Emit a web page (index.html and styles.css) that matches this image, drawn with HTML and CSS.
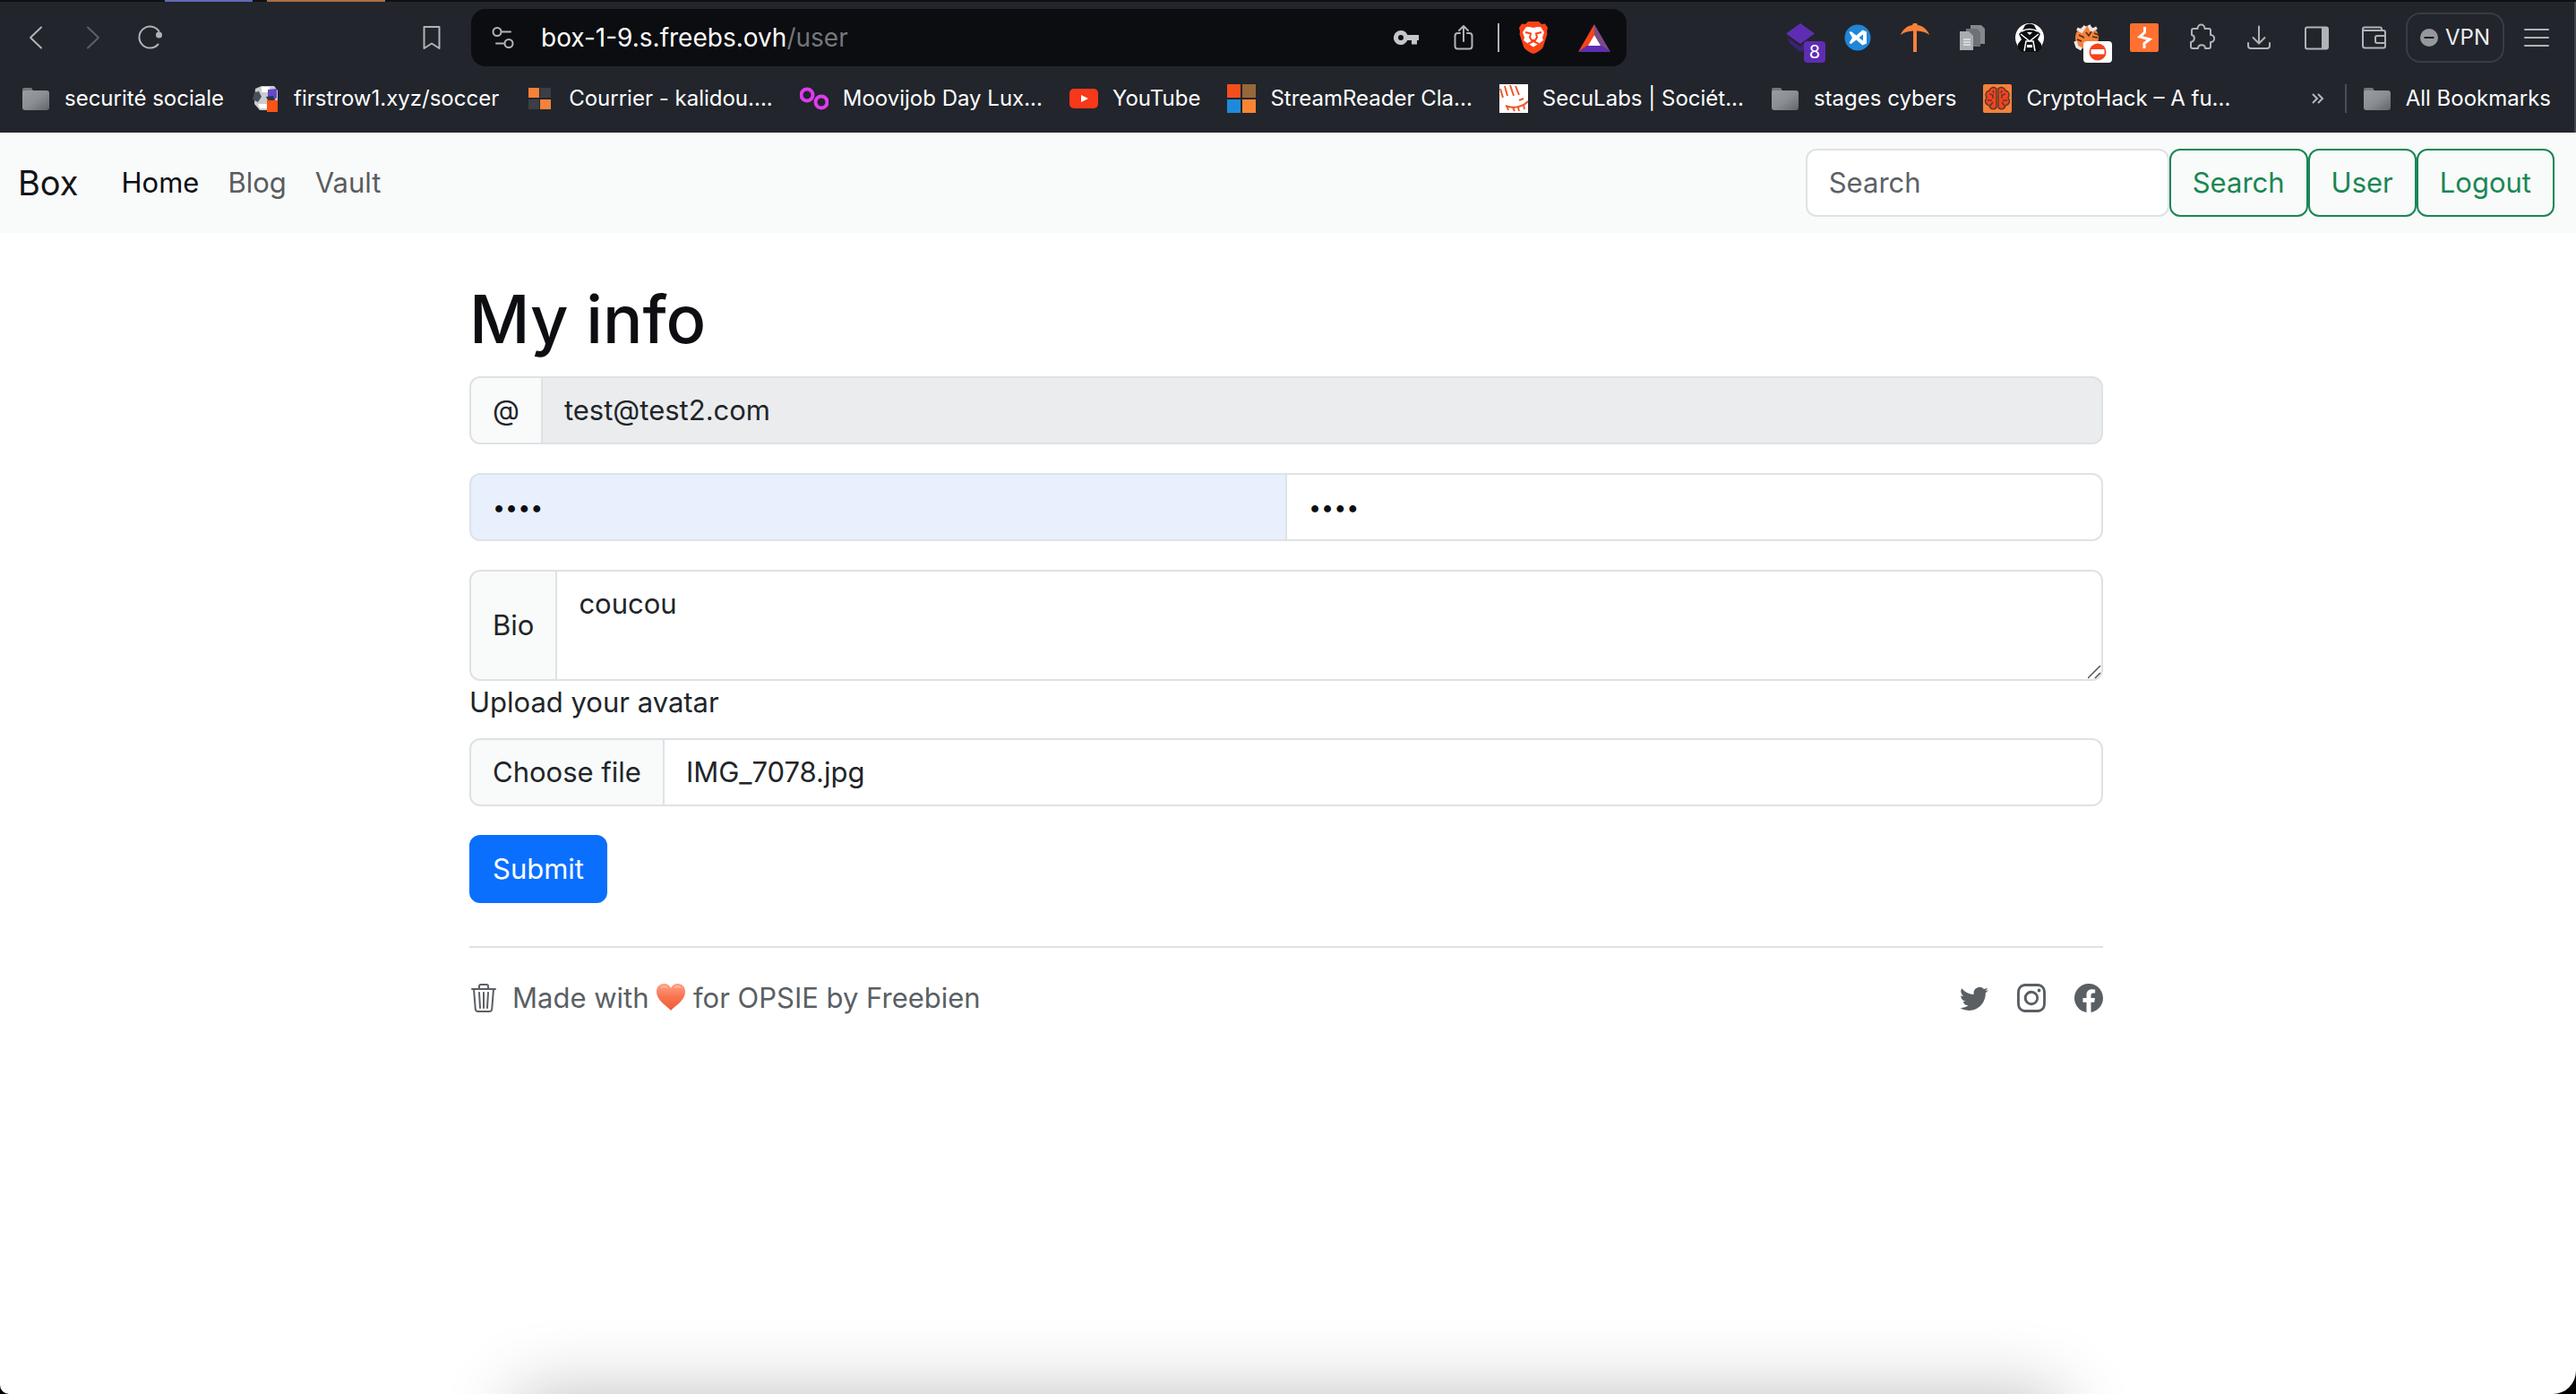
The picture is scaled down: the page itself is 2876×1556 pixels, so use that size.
FILE: index.html
```html
<!DOCTYPE html>
<html lang="en">
<head>
<meta charset="utf-8">
<title>Box - My info</title>
<link rel="stylesheet" href="styles.css">
</head>
<body>
<svg class="defs" aria-hidden="true">
  <defs>
    <linearGradient id="folder-fill" x1="0" y1="0" x2="1" y2="1">
      <stop offset="0" stop-color="#9a9ea2"/><stop offset=".5" stop-color="#8b8f93"/><stop offset="1" stop-color="#62666a"/>
    </linearGradient>
    <linearGradient id="heart-fill" x1="0" y1="0" x2="0" y2="1">
      <stop offset="0" stop-color="#ffa184"/><stop offset=".5" stop-color="#f87450"/><stop offset="1" stop-color="#ee5a30"/>
    </linearGradient>
    <symbol id="folder" viewBox="0 0 32 32">
      <path fill="#74787c" d="M1 6a2 2 0 0 1 2-2h8l2 3h15v6H1z"/>
      <rect x="1" y="7" width="30" height="22" rx="3" fill="url(#folder-fill)"/>
    </symbol>
  </defs>
</svg>
<div class="window">
  <header class="chrome">
    <div class="tab-strip"><span class="tab-mark tab-mark-blue"></span><span class="tab-mark tab-mark-orange"></span></div>
    <div class="toolbar">
      <div class="history">
        <button class="tool" type="button" aria-label="Back"><svg viewBox="0 0 32 32"><path class="line" d="M22 4.500 10 16l12 11.500"/></svg></button>
        <button class="tool tool-dim" type="button" aria-label="Forward"><svg viewBox="0 0 32 32"><path class="line" d="M10 4.500 22 16 10 27.500"/></svg></button>
        <button class="tool" type="button" aria-label="Reload"><svg viewBox="0 0 32 32"><path class="line" d="M24.500 23.500A12 12 0 1 1 25.500 9"/><circle cx="25.500" cy="13" r="3.500" fill="currentColor"/></svg></button>
        <button class="tool tool-last" type="button" aria-label="Bookmark this page"><svg viewBox="0 0 32 32"><path class="line" d="M7.500 4h17v24L16 22.500 7.500 28z"/></svg></button>
      </div>
      <div class="address">
        <button class="tool" type="button" aria-label="Site settings"><svg viewBox="0 0 32 32"><g class="line"><circle cx="9" cy="9.500" r="4.500"/><path d="M14 9.500h10M8 22.500h9"/><circle cx="22" cy="22.500" r="4.500"/></g></svg></button>
        <span class="url">box-1-9.s.freebs.ovh<span class="url-path">/user</span></span>
        <button class="tool key" type="button" aria-label="Passwords"><svg viewBox="0 0 32 32"><path fill="#c3c7cb" fill-rule="evenodd" d="M10 8a8 8 0 1 0 7.300 11H22v4.500h6V19h2v-6H17.300A8 8 0 0 0 10 8m0 5a3 3 0 1 1 0 6 3 3 0 0 1 0-6"/></svg></button>
        <button class="tool share" type="button" aria-label="Share"><svg viewBox="0 0 32 32"><path class="line" d="M12 11H9.500A3 3 0 0 0 6.500 14v11.500a3 3 0 0 0 3 3h13a3 3 0 0 0 3-3V14a3 3 0 0 0-3-3H20M16 20V3.500M11 8l5-5 5 5"/></svg></button>
        <span class="address-rule"></span>
        <button class="tool big" type="button" aria-label="Brave Shields"><svg viewBox="0 0 36 36"><path fill="#fb4218" d="M12 0h12l3 3 4-.5L34 7l-1 4 .5 3-4.500 14c-1 3-7 7-11 8-4-1-10-5-11-8L2.500 14l.5-3-1-4 3-4.500L9 3z"/><path fill="#fff" d="m18 7 4.500-1 3.500 0 4 6-2 6 1 3-4 3-7 4.500L11 24l-4-3 1-3-2-6 4-6h3.500z"/><path fill="none" stroke="#fb4218" stroke-width="2" d="m9 12 6 1.500-1 4 2 3.500h4l2-3.500-1-4 6-1.500M12 25l6-3 6 3"/></svg></button>
        <button class="tool big bat" type="button" aria-label="Brave Rewards"><svg viewBox="0 0 36 36"><path fill="#fb4218" d="M18 3v12l-6 11L0 34z"/><path fill="#7b4a86" d="M18 3v12l6 11 12 8z"/><path fill="#5f2db3" d="M0 34l10-7h16l10 7z"/><path fill="#fff" d="m18 15 7 12H11z"/></svg></button>
      </div>
      <div class="extensions">
        <button class="tool" type="button" aria-label="Layers, 8 items"><svg viewBox="0 0 32 32"><path fill="#3d2277" d="m2 16 14 10 8-7v9l-8 4L4 22z"/><path fill="#5f2db3" d="m16 0 16 11.500L16 23 0 11.500z"/></svg><span class="badge badge-count">8</span></button>
        <button class="tool" type="button" aria-label="VS Code"><svg viewBox="0 0 32 32"><circle cx="16" cy="16" r="14.500" fill="#1f86d8"/><path fill="#fff" fill-rule="evenodd" d="m6.500 10 2-1 6 4.500 7-6 4.500 2v13l-4.500 2-7-6-6 4.500-2-1 3.500-6zM22 12.500 17.500 16l4.500 3.500z"/></svg></button>
        <button class="tool" type="button" aria-label="Pickaxe"><svg viewBox="0 0 32 32"><path fill="#f5813a" d="M14 0h4l1 2c6 1 11 5 13 11-4-3-8-4-14-4.500V32h-4V8.500C8 9 4 10 0 13 2 7 7 3 13 2z"/></svg></button>
        <button class="tool" type="button" aria-label="Documents"><svg viewBox="0 0 32 32"><path fill="#85898d" d="M14 2h12l4 4v17H14z"/><path fill="#6e7276" d="M9 6h12l4 4v16H9z"/><path fill="#a9adb1" d="M2 9h10l5 5v16H2z"/><path stroke="#e4e6e8" stroke-width="1.500" d="M6 18h8M6 21h8M6 24h8"/></svg></button>
        <button class="tool" type="button" aria-label="Agent"><svg viewBox="0 0 32 32"><circle cx="16" cy="16" r="16" fill="#fff"/><path fill="#0d0e12" d="M11 2q5-3 10 0l3 6 4 4-3 6 4 5v5a16 16 0 0 1-26 0v-5l4-5-3-6 4-4z"/><path fill="none" stroke="#fff" stroke-width="1.500" d="M7 9q9-5 18 0M6 12l10 8 10-8M10 31l2-11h8l2 11"/><path fill="#fff" d="M13 10h6l-3 3zM13 24h6v3h-6z"/></svg></button>
        <button class="tool" type="button" aria-label="FoxyProxy, off"><svg viewBox="0 0 32 32"><circle cx="16" cy="16" r="13" fill="#f5813a"/><path fill="none" stroke="#e9e9ea" stroke-width="3.500" d="M5 6l5 3 4-6M18 2l3 6 6-3M3 20l2 6 5 3"/><path fill="none" stroke="#4b2c1c" stroke-width="1.500" d="M7 13l6 3M15 10l3 4 3-5M24 11l5 2M5 18l5 2M22 15l6 1"/></svg><span class="badge badge-off"><svg viewBox="0 0 20 20"><circle cx="10" cy="10" r="9.500" fill="#f4431f"/><rect x="2.500" y="7" width="15" height="5.500" rx="1" fill="#fff"/></svg></span></button>
        <button class="tool" type="button" aria-label="Burp"><svg viewBox="0 0 32 32"><rect width="32" height="32" rx="2" fill="#ff7031"/><path fill="none" stroke="#fff" stroke-width="3" d="M16.500 4v6L11 15l11 3-6 4.500V28"/></svg></button>
        <button class="tool" type="button" aria-label="Extensions"><svg viewBox="0 0 32 32"><path class="line" d="M5 8a2 2 0 0 1 2-2h4.500c0-6 8-6 8 0H24a2 2 0 0 1 2 2v5c5.500 0 5.500 8 0 8v5a2 2 0 0 1-2 2h-4c0-5-8-5-8 0H6a2 2 0 0 1-2-2v-5c5-1 5-7 1-8z"/></svg></button>
        <button class="tool" type="button" aria-label="Downloads"><svg viewBox="0 0 32 32"><path class="line" d="M16 3.500V22M9.500 16l6.500 6.500 6.500-6.500M4 22v3a3 3 0 0 0 3 3h18a3 3 0 0 0 3-3v-3"/></svg></button>
        <button class="tool" type="button" aria-label="Sidebar"><svg viewBox="0 0 32 32"><rect class="line" x="4" y="4.500" width="25" height="24" rx="2"/><path fill="currentColor" d="M22 5h6v23h-6z"/></svg></button>
        <button class="tool" type="button" aria-label="Wallet"><svg viewBox="0 0 32 32"><path class="line" d="M25 8V6.500a2 2 0 0 0-2-2H6a2 2 0 0 0-2 2V25a2.500 2.500 0 0 0 2.500 2.500H27a2 2 0 0 0 2-2V10a2 2 0 0 0-2-2H6a2 2 0 0 1-2-2M29 14h-9a2 2 0 0 0-2 2v4a2 2 0 0 0 2 2h9"/></svg></button>
        <button class="vpn" type="button"><svg viewBox="0 0 20 20"><circle cx="10" cy="10" r="10" fill="#95999e"/><path stroke="#1c1f25" stroke-width="2" d="M4.500 10h11"/></svg>VPN</button>
        <button class="tool" type="button" aria-label="Menu"><svg viewBox="0 0 32 32"><path class="line" d="M3 7h26M3 16h26M3 25h26"/></svg></button>
      </div>
    </div>
    <nav class="bookmarks" aria-label="Bookmarks">
      <a class="bookmark" href="#"><svg viewBox="0 0 32 32"><use href="#folder"/></svg>securité sociale</a>
      <a class="bookmark" href="#"><svg viewBox="0 0 32 32"><path fill="#c9cbd0" d="M5 5 12 2h14l4 5v14l-8 8H10l-6-7z"/><path fill="#fff" d="M12 3h9v6h-9zM8 22h10v5H10z"/><path fill="#4b4f57" d="M4 9l5-1 3 6-4 6-6-3z"/><path fill="#6548c9" d="M19 6l10-1v10l-5 4-5-3z"/><path fill="#33363d" d="M17 14l8-1 2 5-7 2z"/><path fill="#fb5416" d="M18 18h12v13H18z"/></svg>firstrow1.xyz/soccer</a>
      <a class="bookmark" href="#"><svg viewBox="0 0 32 32"><path fill="#f5813a" d="M3 4h12v11H3zM16 17h12v11H16z"/><path fill="#3b3e45" d="M16 4h12v11H16zM3 17h12v11H3z"/></svg>Courrier - kalidou....</a>
      <a class="bookmark" href="#"><svg viewBox="0 0 32 32"><g fill="none" stroke="#e03bf0" stroke-width="4"><circle cx="8" cy="12" r="6.500"/><circle cx="24" cy="20" r="6.500"/></g></svg>Moovijob Day Lux...</a>
      <a class="bookmark" href="#"><svg viewBox="0 0 32 32"><rect y="5" width="32" height="22" rx="5" fill="#f8381a"/><path fill="#fff" d="m13 12 8 4-8 4z"/></svg>YouTube</a>
      <a class="bookmark" href="#"><svg viewBox="0 0 32 32"><path fill="#f24f1d" d="M0 0h15v15H0z"/><path fill="#96683a" d="M17 0h15v15H17z"/><path fill="#1f8adb" d="M0 17h15v15H0z"/><path fill="#f98534" d="M17 17h15v15H17z"/></svg>StreamReader Cla...</a>
      <a class="bookmark" href="#"><svg viewBox="0 0 32 32"><path fill="#fff" d="M0 0h32v32H0z"/><path fill="none" stroke="#ee5a2c" stroke-width="2" d="M1 5l3 10M6 2l3 11M12 1l4 12M18 2l4 10M7 24c8 4 20 1 25-5M8 24l2 5M15 26l2 4M21 26l1 4M27 23l1 5M22 18l5-2"/></svg>SecuLabs | Sociét...</a>
      <a class="bookmark" href="#"><svg viewBox="0 0 32 32"><use href="#folder"/></svg>stages cybers</a>
      <a class="bookmark" href="#"><svg viewBox="0 0 32 32"><rect width="32" height="32" rx="2" fill="#f5813a"/><g fill="#f4431f" stroke="#5a3a2c" stroke-width="1.500"><path d="M15 5c-3-3-7-1-8 2-4 1-5 5-3 8-3 4-1 8 3 9 1 4 6 5 8 2zM17 5c3-3 7-1 8 2 4 1 5 5 3 8 3 4 1 8-3 9-1 4-6 5-8 2z"/><path fill="none" d="M7 11l4 1v4M5 18h5M11 7l1 3M8 24l3-4M25 11l-4 1v4M27 18h-5M21 7l-1 3M24 24l-3-4"/></g></svg>CryptoHack – A fu...</a>
      <button class="more" type="button" aria-label="More bookmarks"><svg viewBox="0 0 16 16"><path fill="none" stroke="#b4b8bc" stroke-width="2" d="m2 3 5 5-5 5M8 3l5 5-5 5"/></svg></button>
      <a class="bookmark bookmark-all" href="#"><svg viewBox="0 0 32 32"><use href="#folder"/></svg>All Bookmarks</a>
    </nav>
  </header>

  <div class="page">
    <nav class="navbar" aria-label="Main">
      <a class="brand" href="#">Box</a>
      <a class="nav-link nav-link-active" href="#">Home</a>
      <a class="nav-link" href="#">Blog</a>
      <a class="nav-link" href="#">Vault</a>
      <form class="search">
        <input class="control search-box" type="search" placeholder="Search" aria-label="Search">
        <button class="btn btn-outline" type="submit">Search</button>
        <button class="btn btn-outline" type="button">User</button>
        <button class="btn btn-outline" type="button">Logout</button>
      </form>
    </nav>

    <main class="container">
      <h1 class="title">My info</h1>
      <form>
        <div class="group">
          <label class="addon" for="email">@</label>
          <input class="control" id="email" type="text" value="test@test2.com" disabled>
        </div>
        <div class="group">
          <input class="control control-password control-filled" type="password" value="test" aria-label="Password">
          <input class="control control-password" type="password" value="test" aria-label="Confirm password">
        </div>
        <div class="group group-bio">
          <label class="addon" for="bio">Bio</label>
          <textarea class="control" id="bio" rows="2">coucou</textarea>
        </div>
        <label class="form-label" for="avatar">Upload your avatar</label>
        <div class="group">
          <input class="file-input" id="avatar" type="file">
          <label class="file" for="avatar"><span class="addon">Choose file</span><span class="control">IMG_7078.jpg</span></label>
        </div>
        <button class="btn btn-primary" type="submit">Submit</button>
      </form>
      <footer class="footer">
        <a class="icon-link" href="#" aria-label="Trash"><svg viewBox="0 0 16 16"><path d="M6.500 1h3a.5.5 0 0 1 .5.5v1H6v-1a.5.5 0 0 1 .5-.5M11 2.500v-1A1.500 1.500 0 0 0 9.500 0h-3A1.500 1.500 0 0 0 5 1.500v1H1.500a.5.5 0 0 0 0 1h.538l.853 10.660A2 2 0 0 0 4.885 16h6.230a2 2 0 0 0 1.994-1.840l.853-10.660h.538a.5.5 0 0 0 0-1zm1.958 1-.846 10.580a1 1 0 0 1-.997.920h-6.230a1 1 0 0 1-.997-.920L3.042 3.500zm-7.487 1a.5.5 0 0 1 .528.470l.5 8.500a.5.5 0 0 1-.998.060L5 5.030a.5.5 0 0 1 .470-.530Zm5.058 0a.5.5 0 0 1 .470.530l-.5 8.500a.5.5 0 1 1-.998-.060l.5-8.500a.5.5 0 0 1 .528-.470M8 4.500a.5.5 0 0 1 .5.5v8.500a.5.5 0 0 1-1 0V5a.5.5 0 0 1 .5-.5"/></svg></a>
        <p class="credit">Made with <svg class="heart" viewBox="0 0 32 32" role="img" aria-label="love"><path fill="url(#heart-fill)" d="M16 31C12 26 0 20 0 10 0 4 4 1 8.500 1 12 1 15 3 16 6c1-3 4-5 7.500-5C28 1 32 4 32 10c0 10-12 16-16 21"/><path fill="#ffc4b0" opacity=".7" d="M4 6c1-3 7-4 9 0-3-1-6-1-9 0M19 6c2-4 8-3 9 0-3-1-6-1-9 0"/></svg> for OPSIE by Freebien</p>
        <a class="icon-link icon-link-first" href="#" aria-label="Twitter"><svg viewBox="0 0 16 16"><path d="M5.026 15c6.038 0 9.341-5.003 9.341-9.334q.002-.211-.006-.422A6.700 6.700 0 0 0 16 3.542a6.700 6.700 0 0 1-1.889.518 3.300 3.300 0 0 0 1.447-1.817 6.500 6.500 0 0 1-2.087.793A3.286 3.286 0 0 0 7.875 6.030a9.320 9.320 0 0 1-6.767-3.429 3.290 3.290 0 0 0 1.018 4.382A3.300 3.300 0 0 1 .640 6.575v.045a3.290 3.290 0 0 0 2.632 3.218 3.200 3.200 0 0 1-.865.115 3 3 0 0 1-.614-.057 3.280 3.280 0 0 0 3.067 2.277A6.600 6.600 0 0 1 .780 13.580a6 6 0 0 1-.780-.045A9.340 9.340 0 0 0 5.026 15"/></svg></a>
        <a class="icon-link" href="#" aria-label="Instagram"><svg viewBox="0 0 16 16"><path d="M8 0C5.829 0 5.556.010 4.703.048 3.850.088 3.269.222 2.760.420a3.900 3.900 0 0 0-1.417.923A3.900 3.900 0 0 0 .420 2.760C.222 3.268.087 3.850.048 4.700.010 5.555 0 5.827 0 8.001c0 2.172.010 2.444.048 3.297.040.852.174 1.433.372 1.942.205.526.478.972.923 1.417.444.445.890.719 1.416.923.510.198 1.090.333 1.942.372C5.555 15.990 5.827 16 8 16s2.444-.010 3.298-.048c.851-.040 1.434-.174 1.943-.372a3.900 3.900 0 0 0 1.416-.923c.445-.445.718-.891.923-1.417.197-.509.332-1.090.372-1.942C15.990 10.445 16 10.173 16 8s-.010-2.445-.048-3.299c-.040-.851-.175-1.433-.372-1.941a3.900 3.900 0 0 0-.923-1.417A3.900 3.900 0 0 0 13.240.420c-.510-.198-1.092-.333-1.943-.372C10.443.010 10.172 0 7.998 0zm-.717 1.442h.718c2.136 0 2.389.007 3.232.046.780.035 1.204.166 1.486.275.373.145.640.319.920.599s.453.546.598.920c.110.281.240.705.275 1.485.039.843.047 1.096.047 3.231s-.008 2.389-.047 3.232c-.035.780-.166 1.203-.275 1.485a2.500 2.500 0 0 1-.599.919c-.280.280-.546.453-.920.598-.280.110-.704.240-1.485.276-.843.038-1.096.047-3.232.047s-2.390-.009-3.233-.047c-.780-.036-1.203-.166-1.485-.276a2.500 2.500 0 0 1-.920-.598 2.500 2.500 0 0 1-.600-.920c-.109-.281-.240-.705-.275-1.485-.038-.843-.046-1.096-.046-3.233s.008-2.388.046-3.231c.036-.780.166-1.204.276-1.486.145-.373.319-.640.599-.920s.546-.453.920-.598c.282-.110.705-.240 1.485-.276.738-.034 1.024-.044 2.515-.045zm4.988 1.328a.960.960 0 1 0 0 1.920.960.960 0 0 0 0-1.920m-4.270 1.122a4.109 4.109 0 1 0 0 8.217 4.109 4.109 0 0 0 0-8.217m0 1.441a2.667 2.667 0 1 1 0 5.334 2.667 2.667 0 0 1 0-5.334"/></svg></a>
        <a class="icon-link" href="#" aria-label="Facebook"><svg viewBox="0 0 16 16"><path d="M16 8.049c0-4.446-3.582-8.050-8-8.050C3.580 0-.002 3.603-.002 8.050c0 4.017 2.926 7.347 6.750 7.951v-5.625h-2.030V8.050H6.750V6.275c0-2.017 1.195-3.131 3.022-3.131.876 0 1.791.157 1.791.157v1.980h-1.009c-.993 0-1.303.621-1.303 1.258v1.510h2.218l-.354 2.326H9.250V16c3.824-.604 6.750-3.934 6.750-7.951"/></svg></a>
      </footer>
    </main>
    <div class="dock-shadow"></div>
  </div>
</div>
</body>
</html>
```
FILE: styles.css
```css
* { box-sizing: border-box; }

html { background: #000; }

body {
  margin: 0;
  font-family: Inter, "Liberation Sans", sans-serif;
  font-size: 31px;
  line-height: 48px;
  color: #212529;
}

a { color: inherit; text-decoration: none; }
button, input, textarea { font: inherit; color: inherit; margin: 0; }
svg { display: block; }

.defs { position: absolute; width: 0; height: 0; }

.window {
  display: flex;
  flex-direction: column;
  min-height: 100vh;
  background: #fff;
  border-radius: 0 0 26px 10px;
  overflow: hidden;
}

/* Browser chrome */
.chrome {
  background: #22252c;
  color: #fff;
  font-size: 24px;
  line-height: 32px;
  padding-bottom: 10px;
  box-shadow: inset -2px 0 #43464c;
}

.tab-strip {
  display: flex;
  gap: 16px;
  height: 2px;
  padding-left: 184px;
  background: #0f1014;
}
.tab-mark-blue { width: 98px; background: #5f6bb5; }
.tab-mark-orange { width: 132px; background: #a86e48; }

.toolbar {
  display: flex;
  align-items: center;
  height: 80px;
  padding: 0 28px 0 24px;
}

.history {
  display: flex;
  flex: 0 0 474px;
  gap: 32px;
}
.tool {
  position: relative;
  flex: none;
  width: 32px;
  height: 32px;
  padding: 0;
  border: 0;
  background: none;
  color: #b0b4b9;
}
.tool svg { width: 100%; height: 100%; }
.tool-dim { color: #5d6066; }
.tool-last { margin-left: auto; }
.line {
  fill: none;
  stroke: currentColor;
  stroke-width: 2;
  stroke-linecap: round;
  stroke-linejoin: round;
}

.address {
  display: flex;
  align-items: center;
  flex: 0 1 1290px;
  height: 64px;
  margin-left: 28px;
  padding: 0 18px 0 20px;
  border-radius: 16px;
  background: #0c0d11;
}
.url {
  margin-left: 26px;
  font-size: 28px;
}
.url-path { color: #73777b; }
.key { margin-left: auto; }
.share { margin-left: 32px; }
.address-rule {
  width: 2px;
  height: 32px;
  margin: 0 20px 0 22px;
  background: #b0b4b9;
}
.big { width: 36px; height: 36px; }
.bat { margin-left: 32px; }

.extensions {
  display: flex;
  align-items: center;
  gap: 32px;
  margin-left: auto;
}
.badge {
  position: absolute;
  top: 20px;
  display: flex;
  align-items: center;
  justify-content: center;
  height: 24px;
  border-radius: 4px;
}
.badge-count {
  left: 20px;
  width: 24px;
  background: #5f2db3;
  color: #fff;
  font-size: 20px;
}
.badge-off { left: 12px; width: 32px; background: #fff; }
.badge-off svg { width: 20px; height: 20px; }

.vpn {
  display: flex;
  align-items: center;
  justify-content: center;
  gap: 8px;
  width: 110px;
  height: 56px;
  margin: 0 -12px;
  padding: 0;
  border: 2px solid #3a3c45;
  border-radius: 16px;
  background: none;
  color: #eceef0;
}
.vpn svg { width: 20px; height: 20px; }

.bookmarks {
  display: flex;
  align-items: center;
  gap: 30px;
  height: 56px;
  padding: 0 28px 0 24px;
  white-space: nowrap;
}
.bookmark {
  display: flex;
  align-items: center;
  gap: 16px;
}
.bookmark svg { width: 32px; height: 32px; }
.more {
  margin-left: auto;
  margin-right: -8px;
  padding: 0;
  border: 0;
  background: none;
}
.more svg { width: 16px; height: 16px; }
.bookmark-all {
  padding-left: 18px;
  border-left: 2px solid #4b4e55;
}

/* Site */
.page {
  position: relative;
  flex: 1;
  overflow: hidden;
}

.navbar {
  display: flex;
  align-items: center;
  padding: 18px 24px 18px 20px;
  background: #f9fafa;
}
.brand {
  margin-right: 32px;
  font-size: 38px;
  line-height: 60px;
  color: #121418;
}
.nav-link { padding: 0 16px; color: #5a5d61; }
.nav-link-active { color: #0c0e12; }

.search { display: flex; margin-left: auto; }
.search-box { width: 406px; border-radius: 12px; }
.search-box::placeholder { color: #5c6167; opacity: 1; }

.btn {
  padding: 12px 24px;
  border: 2px solid;
  border-radius: 12px;
  cursor: pointer;
}
.btn-outline { border-color: #198754; background: none; color: #198754; }
.btn-primary { border-color: #0b6ffd; background: #0b6ffd; color: #fff; }

.container {
  width: 1824px;
  max-width: 100%;
  margin: 0 auto;
  padding: 48px 0;
  position: relative;
  left: -2px;
}

.title {
  margin: 0 0 16px;
  font-size: 74px;
  line-height: 96px;
  font-weight: 500;
  color: #0c0e12;
}

.group { display: flex; margin-bottom: 32px; }
.group-bio { margin-bottom: 0; }

.control {
  flex: 1;
  min-width: 0;
  padding: 12px 24px;
  border: 2px solid #dee2e6;
  background: #fff;
  color: #212529;
  appearance: none;
}
.group .control + .control,
.addon + .control { margin-left: -2px; }
.control:disabled { background: #ebecee; }
.control-password { font-size: 25px; color: #0c0e12; }
.control-filled { background: #e8f0fe; }
.group .control:last-child { border-radius: 0 12px 12px 0; }
.group .control:first-child { border-radius: 12px 0 0 12px; }
textarea.control { height: 124px; resize: vertical; }
textarea.control::-webkit-resizer {
  background: url("data:image/svg+xml,%3Csvg xmlns='http://www.w3.org/2000/svg' viewBox='0 0 15 15'%3E%3Cpath d='M0 14 14 0M8 14l6-6' stroke='%23505458' stroke-width='1.500'/%3E%3C/svg%3E") no-repeat;
}

.addon {
  display: flex;
  align-items: center;
  padding: 12px 24px;
  border: 2px solid #dee2e6;
  border-radius: 12px 0 0 12px;
  background: #f9fafa;
}

.form-label { display: block; margin-bottom: 16px; }
.file { display: flex; flex: 1; }
.file-input {
  position: absolute;
  width: 1px;
  height: 1px;
  opacity: 0;
}

.footer {
  display: flex;
  align-items: center;
  gap: 32px;
  margin-top: 48px;
  padding-top: 32px;
  border-top: 2px solid #dee2e6;
  color: #5a5f64;
}
.icon-link svg { width: 32px; height: 32px; fill: currentColor; }
.icon-link-first { margin-left: auto; }
.credit { margin: 0 0 0 -16px; }
.heart {
  display: inline-block;
  width: 32px;
  height: 32px;
  vertical-align: -4px;
}

/* Soft shade cast by the dock just below the window */
.dock-shadow {
  position: absolute;
  top: 100%;
  left: 20%;
  right: 20%;
  height: 200px;
  border-radius: 24px;
  box-shadow: 0 0 80px rgba(20, 25, 30, .28);
}
```
